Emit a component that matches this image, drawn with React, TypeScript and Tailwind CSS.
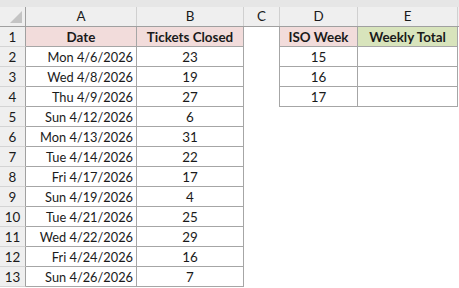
import React from "react";

const dates = [
  "Mon 4/6/2026",
  "Wed 4/8/2026",
  "Thu 4/9/2026",
  "Sun 4/12/2026",
  "Mon 4/13/2026",
  "Tue 4/14/2026",
  "Fri 4/17/2026",
  "Sun 4/19/2026",
  "Tue 4/21/2026",
  "Wed 4/22/2026",
  "Fri 4/24/2026",
  "Sun 4/26/2026",
];
const tickets = [23, 19, 27, 6, 31, 22, 17, 4, 25, 29, 16, 7];
const weeks = [15, 16, 17];

const font = { fontFamily: 'Lato, "Liberation Sans", Arial, sans-serif' };

export default function App() {
  return (
    <div className="w-[459px] h-[288px] overflow-hidden bg-white text-[13.4px] text-[#1a1a1a]" style={font}>
      <div className="h-[7px] bg-[#e6e6e6]" />
      {/* column header */}
      <div className="flex h-[20px] bg-[#efefef] border-b border-[#a0a0a0]">
        <div className="w-[26px] shrink-0 border-r border-[#a0a0a0] relative">
          <div className="absolute right-[3px] bottom-[3px] w-0 h-0 border-l-[12px] border-l-transparent border-b-[12px] border-b-[#c4c4c4]" />
        </div>
        {[
          ["A", "w-[111px]"],
          ["B", "w-[107px]"],
          ["C", "w-[36px]"],
          ["D", "w-[78px]"],
          ["E", "w-[100px]"],
        ].map(([l, w]) => (
          <div key={l} className={`${w} shrink-0 border-r border-[#d0d0d0] flex items-center justify-center leading-none pt-[1px]`}>
            {l}
          </div>
        ))}
        <div className="flex-1" />
      </div>
      {Array.from({ length: 13 }).map((_, i) => {
        const r = i + 1;
        const isHead = r === 1;
        const hasRight = r <= 4;
        return (
          <div key={r} className="flex h-[20px]">
            <div className="w-[26px] shrink-0 bg-[#efefef] border-r border-b border-r-[#a0a0a0] border-b-[#d4d4d4] flex items-center justify-center leading-none pt-[2px]">
              {r}
            </div>
            <div
              className={`w-[111px] shrink-0 border-r border-b border-[#a6a6a6] flex items-center leading-none pt-[2px] ${
                isHead ? "justify-center font-bold bg-[#f2dcdb]" : "justify-end pr-[3px] text-[12.8px]"
              }`}
            >
              {isHead ? "Date" : dates[i - 1]}
            </div>
            <div
              className={`w-[107px] shrink-0 border-r border-b border-[#a6a6a6] flex items-center justify-center leading-none pt-[2px] ${
                isHead ? "font-bold bg-[#f2dcdb]" : ""
              }`}
            >
              {isHead ? "Tickets Closed" : tickets[i - 1]}
            </div>
            <div className={`w-[36px] shrink-0 ${hasRight ? "border-r border-[#a6a6a6]" : ""}`} />
            {hasRight ? (
              <>
                <div
                  className={`w-[78px] shrink-0 border-r border-b border-[#a6a6a6] flex items-center justify-center leading-none pt-[2px] ${
                    isHead ? "font-bold bg-[#f2dcdb]" : ""
                  }`}
                >
                  {isHead ? "ISO Week" : weeks[i - 1]}
                </div>
                <div
                  className={`w-[100px] shrink-0 border-r border-b border-[#a6a6a6] flex items-center justify-center leading-none pt-[2px] ${
                    isHead ? "font-bold bg-[#d8e4bc]" : ""
                  }`}
                >
                  {isHead ? "Weekly Total" : ""}
                </div>
              </>
            ) : (
              <div className="w-[178px] shrink-0" />
            )}
            <div className="flex-1" />
          </div>
        );
      })}
    </div>
  );
}
